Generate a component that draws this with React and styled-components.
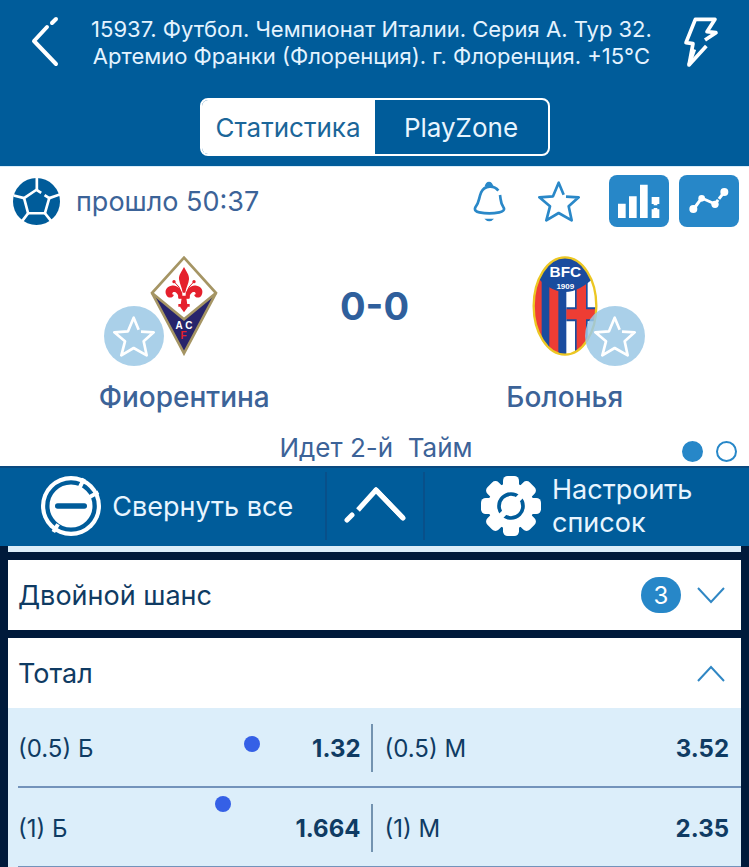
import React, { useState } from "react";
import styled, { createGlobalStyle } from "styled-components";

const GlobalStyle = createGlobalStyle`
  * {
    box-sizing: border-box;
  }
  html {
    scrollbar-width: none;
  }
  body {
    margin: 0;
    background: #001a3b;
    font-family: Inter, "Liberation Sans", sans-serif;
  }
  button {
    font: inherit;
    color: inherit;
    background: none;
    border: 0;
    padding: 0;
    cursor: pointer;
  }
  svg {
    display: block;
  }
`;

const Header = styled.header`
  background: #005c9a;
  color: #fff;
  padding: 16px 30px 10px;
  border-bottom: 1px solid #d8edfa;
`;

const TitleRow = styled.div`
  display: flex;
  justify-content: space-between;
  align-items: flex-start;
`;

const Title = styled.h1`
  margin: 0;
  flex: 1;
  font-size: 22px;
  line-height: 27px;
  font-weight: 400;
  text-align: center;
  color: #e4f3ff;
`;

const Tabs = styled.div`
  display: flex;
  width: 350px;
  height: 58px;
  margin: 28px auto 0;
  border: 2px solid #fff;
  border-radius: 8px;
  overflow: hidden;
`;

const Tab = styled.button`
  flex: 1;
  font-size: 26px;
  background: ${(p) => (p.$active ? "#fff" : "transparent")};
  color: ${(p) => (p.$active ? "#1b6699" : "#e8f5ff")};
`;

const Match = styled.section`
  background: #fff;
  color: #3c6398;
  padding: 8px 10px 2px 13px;
`;

const TopRow = styled.div`
  display: flex;
  align-items: center;
  height: 52px;
`;

const Clock = styled.span`
  flex: 1;
  margin-left: 16px;
  font-size: 27px;
`;

const Actions = styled.div`
  display: flex;
  gap: 10px;
`;

const IconButton = styled.button`
  width: 60px;
  height: 52px;
  display: flex;
  align-items: center;
  justify-content: center;
  border-radius: 8px;
  color: #2a88c8;
  background: ${(p) => (p.$filled ? "#2787c8" : "transparent")};
  margin-right: ${(p) => (p.$spaced ? "10px" : "0")};
`;

const Teams = styled.div`
  display: grid;
  grid-template-columns: 1fr 120px 1fr;
  margin-top: 29px;
  padding: 0 44px 0 41px;
`;

const Team = styled.div`
  display: flex;
  flex-direction: column;
  align-items: center;
  gap: 25px;
`;

const Crest = styled.div`
  position: relative;
  width: 68px;
  height: 100px;
`;

const FavButton = styled.button`
  position: absolute;
  bottom: -10px;
  ${(p) => p.$side}: -46px;
  width: 60px;
  height: 60px;
  display: flex;
  align-items: center;
  justify-content: center;
  border-radius: 50%;
  background: rgba(155, 200, 229, 0.85);
  color: #fff;
`;

const TeamName = styled.h2`
  margin: 0;
  font-size: 28px;
  line-height: 32px;
  font-weight: 500;
`;

const Score = styled.div`
  text-align: center;
  font-size: 38px;
  line-height: 100px;
  font-weight: 700;
  white-space: nowrap;
  color: #2f5f9c;
`;

const StatusRow = styled.div`
  display: grid;
  grid-template-columns: 1fr auto 1fr;
  margin-top: 19px;
`;

const Status = styled.p`
  grid-column: 2;
  margin: 0;
  font-size: 26px;
  line-height: 32px;
  white-space: pre;
`;

const Pager = styled.div`
  display: flex;
  justify-content: flex-end;
  align-items: center;
  gap: 13px;
  padding: 6px 2px 0 0;
`;

const PagerDot = styled.button`
  width: 21px;
  height: 21px;
  border-radius: 50%;
  border: 2px solid #2787c8;
  background: ${(p) => (p.$active ? "#2787c8" : "#fff")};
`;

const Toolbar = styled.nav`
  display: grid;
  grid-template-columns: 1fr 100px 1fr;
  height: 80px;
  background: #005c9a;
  border-top: 2px solid #0a4a80;
  color: #e8f5ff;
`;

const ToolButton = styled.button`
  display: flex;
  align-items: center;
  justify-content: center;
  gap: 11px;
  padding: ${(p) => (p.$inset ? "0 0 2px 10px" : "0 0 2px")};
  font-size: 27px;
  line-height: 33px;
  text-align: left;
`;

const ToggleButton = styled(ToolButton)`
  margin: 4px 0 6px;
  border: solid #08508a;
  border-width: 0 2px;
`;

const Markets = styled.main`
  padding: 0 8px;
`;

const PreviousMarket = styled.div`
  height: 6px;
  background: #dceefa;
`;

const Market = styled.section`
  margin-top: 8px;
  background: #fff;
  color: #0f3b63;
`;

const MarketHead = styled.button`
  display: flex;
  align-items: center;
  gap: 16px;
  width: 100%;
  height: 70px;
  padding: 0 16px 0 10px;
  font-size: 27px;
  text-align: left;
`;

const MarketName = styled.span`
  flex: 1;
`;

const Count = styled.span`
  width: 40px;
  height: 36px;
  border-radius: 18px;
  background: #2787c8;
  color: #fff;
  font-size: 24px;
  line-height: 38px;
  text-align: center;
`;

const Odds = styled.div`
  position: relative;
  background: #dceefa;
  padding-left: 10px;
`;

const OddsRow = styled.div`
  display: grid;
  grid-template-columns: calc(50% - 7px) 1fr;
  align-items: center;
  height: 80px;
  padding-top: 2px;
  border-bottom: 2px solid #7393bb;
`;

const Outcome = styled.button`
  display: flex;
  align-items: center;
  justify-content: space-between;
  height: 48px;
  padding: ${(p) => (p.$first ? "0 10px 0 0" : "0 12px")};
  border-right: ${(p) => (p.$first ? "2px solid #7393b0" : "0")};
  font-size: 24px;

  strong {
    font-weight: 700;
  }
`;

// touch marks left on top of the odds grid
const Mark = styled.span`
  position: absolute;
  left: ${(p) => p.$x}px;
  top: ${(p) => p.$y}px;
  width: 16px;
  height: 16px;
  border-radius: 50%;
  background: #3560e6;
`;

const BackIcon = () => (
  <svg width="30" height="52" viewBox="0 0 30 52" fill="none" stroke="#fff" strokeWidth="4">
    <path d="M26 3L22 7" strokeLinecap="round" />
    <path d="M17 11L4 25L26 48" strokeLinecap="round" strokeLinejoin="round" />
  </svg>
);

const BoltIcon = () => (
  <svg width="36" height="52" viewBox="0 0 108 156" fill="none" stroke="#fff" strokeWidth="11" strokeLinejoin="round">
    <path d="M66 72L99 50L72 47L96 10L37 10L9 80L30 83L18 147L70 90" />
    <path d="M18 147L34 100" />
  </svg>
);

const BallIcon = () => (
  <svg width="47" height="47" viewBox="0 0 140 140">
    <circle cx="70" cy="70" r="70" fill="#005c9a" />
    <g fill="none" stroke="#fff" strokeWidth="8">
      <path d="M84 44L70 35L33 60L45 105H95L108 60L94 51" />
      <path d="M71 0V36M33 60L2 52M108 60L140 49M95 105L115 130M45 105L26 130" />
    </g>
  </svg>
);

const BellIcon = () => (
  <svg width="34" height="42" viewBox="0 0 102 126">
    <path
      d="M79 32C67 16 38 14 27 38C19 57 23 66 10 82C6 91 13 95 22 97C42 101 62 101 82 97C92 95 99 90 95 83C84 67 87 60 84 45"
      fill="none"
      stroke="currentColor"
      strokeWidth="8"
    />
    <path d="M38 19Q41 5 51 5Q61 5 64 19ZM37 116H66Q52 132 37 116Z" fill="currentColor" />
  </svg>
);

const StarIcon = () => (
  <svg width="42" height="41" viewBox="0 0 126 123" fill="none" stroke="currentColor" strokeWidth="8" strokeLinejoin="round">
    <path d="M77 41L62 5L45 46L4 49L36 76L25 118L62 96L101 118L92 76L122 49L84 47" />
  </svg>
);

const BarsIcon = () => (
  <svg width="42" height="34" viewBox="0 0 126 102" fill="#fff">
    <path d="M0 59H23V102H0ZM33 37H56V102H33ZM66 2H89V102H66ZM101 39H124V60H101ZM101 76H124V102H101Z" />
    <path d="M107 58H118V64H107ZM107 72H118V78H107Z" />
  </svg>
);

const LineIcon = () => (
  <svg width="40" height="26" viewBox="0 0 120 78">
    <path d="M14 63L38 30L78 48L105 13" fill="none" stroke="#fff" strokeWidth="9" />
    <g fill="#fff">
      <circle cx="13" cy="63" r="12" />
      <circle cx="38" cy="31" r="10" />
      <circle cx="78" cy="49" r="11" />
      <circle cx="106" cy="12" r="12" />
    </g>
    <path d="M84 31L96 40" stroke="#2787c8" strokeWidth="4" />
  </svg>
);

const FiorentinaCrest = () => (
  <svg width="68" height="100" viewBox="0 0 204 300">
    <path d="M102 5L198 111L102 292L6 111Z" fill="#27246b" />
    <path d="M102 5L198 111L102 190L6 111Z" fill="#fff" />
    <path d="M6 111L102 190L198 111" fill="none" stroke="#a59564" strokeWidth="8" />
    <path d="M102 5L198 111L102 292L6 111Z" fill="none" stroke="#a59564" strokeWidth="8" />
    <g fill="#e5202c">
      <path d="M102 33C94 48 86 57 87 70C89 84 96 94 98 110H106C108 94 116 84 117 70C118 57 110 48 102 33Z" />
      <path d="M97 114C94 97 79 85 64 89C49 91 43 105 49 117C54 128 68 127 72 116C64 117 66 106 74 108C82 110 86 120 86 128H97Z" />
      <path d="M107 114C110 97 125 85 140 89C155 91 161 105 155 117C150 128 136 127 132 116C140 117 138 106 130 108C122 110 118 120 118 128H107Z" />
      <path d="M85 119H119V127H85ZM95 125H109L113 154L102 169L91 154ZM85 144H119V152H85Z" />
      <circle cx="72" cy="77" r="5" />
      <circle cx="132" cy="77" r="5" />
    </g>
    <path d="M73 78Q90 91 95 113M131 78Q114 91 109 113" fill="none" stroke="#e5202c" strokeWidth="3" />
    <text fontFamily="Liberation Sans, sans-serif" fontWeight="700" fontSize="30" textAnchor="middle">
      <tspan x="102" y="220" fill="#fff">
        A C
      </tspan>
      <tspan x="101" y="248" fill="#e5202c">
        F
      </tspan>
    </text>
  </svg>
);

const BolognaCrest = () => (
  <svg width="68" height="100" viewBox="0 0 204 300">
    <clipPath id="oval">
      <ellipse cx="102" cy="150" rx="94" ry="146" />
    </clipPath>
    <g clipPath="url(#oval)">
      <path d="M0 0H204V300H0Z" fill="#1a4c9e" />
      <path d="M0 60H32V300H0ZM55 90H82V300H55Z" fill="#ee3d34" />
      <path d="M106 70H204V300H106Z" fill="#fff" />
      <path d="M132 70H170V300H132ZM106 154H204V196H106Z" fill="#1a4c9e" />
      <path d="M137 70H165V300H137ZM106 160H204V190H106Z" fill="#ee3d34" />
      <path d="M0 0H204V50Q150 108 102 108Q50 108 0 42Z" fill="#1a4c9e" />
    </g>
    <ellipse cx="102" cy="150" rx="94" ry="146" fill="none" stroke="#ecc723" strokeWidth="7" />
    <g fill="#fff" fontFamily="Liberation Sans, sans-serif" fontWeight="700" textAnchor="middle">
      <text x="103" y="63" fontSize="46">
        BFC
      </text>
      <text x="103" y="99" fontSize="24">
        1909
      </text>
    </g>
  </svg>
);

const CollapseIcon = () => (
  <svg width="60" height="60" viewBox="0 0 180 180">
    <circle cx="90" cy="90" r="90" fill="#fff" />
    <circle cx="90" cy="90" r="71" fill="none" stroke="#005c9a" strokeWidth="13" />
    <path d="M51 145L37 168M116 35L129 8M140 66L172 49" stroke="#fff" strokeWidth="12" />
    <path d="M50 90H130" stroke="#005c9a" strokeWidth="16" strokeLinecap="round" />
  </svg>
);

const GearIcon = () => (
  <svg width="60" height="60" viewBox="0 0 180 180">
    <g fill="#fff">
      <circle cx="90" cy="90" r="69" />
      {[0, 45, 90, 135].map((angle) => (
        <rect key={angle} x="66" y="0" width="48" height="180" rx="14" transform={`rotate(${angle} 90 90)`} />
      ))}
    </g>
    <circle cx="90" cy="90" r="36" fill="none" stroke="#005c9a" strokeWidth="11" />
    <path d="M56 124L72 108M108 72L124 56" stroke="#fff" strokeWidth="18" />
  </svg>
);

const ArrowUpIcon = () => (
  <svg width="62" height="40" viewBox="0 0 62 40" fill="none" stroke="#fff" strokeWidth="5">
    <path d="M3 35L8 30" strokeLinecap="round" />
    <path d="M14 25L32 5L59 33" strokeLinejoin="round" />
    <path d="M32 5L59 33" strokeLinecap="round" />
  </svg>
);

const Chevron = ({ up }) => (
  <svg width="28" height="17" viewBox="0 0 28 17" fill="none" stroke="#3087c4" strokeWidth="2">
    <path d={up ? "M1 16L14 2L27 16" : "M1 1L14 15L27 1"} />
  </svg>
);

const totals = [
  { line: "(0.5)", over: "1.32", under: "3.52" },
  { line: "(1)", over: "1.664", under: "2.35" },
];

export default function App() {
  const [tab, setTab] = useState("stats");
  const [open, setOpen] = useState(true);

  return (
    <>
      <GlobalStyle />
      <Header>
        <TitleRow>
          <button aria-label="Назад">
            <BackIcon />
          </button>
          <Title>
            15937. Футбол. Чемпионат Италии. Серия А. Тур 32.
            <br />
            Артемио Франки (Флоренция). г. Флоренция. +15°C
          </Title>
          <button aria-label="Быстрая ставка">
            <BoltIcon />
          </button>
        </TitleRow>
        <Tabs>
          <Tab $active={tab === "stats"} onClick={() => setTab("stats")}>
            Статистика
          </Tab>
          <Tab $active={tab === "zone"} onClick={() => setTab("zone")}>
            PlayZone
          </Tab>
        </Tabs>
      </Header>

      <Match>
        <TopRow>
          <BallIcon />
          <Clock>прошло 50:37</Clock>
          <Actions>
            <IconButton aria-label="Уведомления">
              <BellIcon />
            </IconButton>
            <IconButton aria-label="В избранное" $spaced>
              <StarIcon />
            </IconButton>
            <IconButton aria-label="Статистика матча" $filled>
              <BarsIcon />
            </IconButton>
            <IconButton aria-label="График" $filled>
              <LineIcon />
            </IconButton>
          </Actions>
        </TopRow>
        <Teams>
          <Team>
            <Crest>
              <FiorentinaCrest />
              <FavButton $side="left" aria-label="Фиорентина в избранное">
                <StarIcon />
              </FavButton>
            </Crest>
            <TeamName>Фиорентина</TeamName>
          </Team>
          <Score>0-0</Score>
          <Team>
            <Crest>
              <BolognaCrest />
              <FavButton $side="right" aria-label="Болонья в избранное">
                <StarIcon />
              </FavButton>
            </Crest>
            <TeamName>Болонья</TeamName>
          </Team>
        </Teams>
        <StatusRow>
          <Status>{"Идет 2-й  Тайм"}</Status>
          <Pager>
            <PagerDot $active aria-label="Страница 1" />
            <PagerDot aria-label="Страница 2" />
          </Pager>
        </StatusRow>
      </Match>

      <Toolbar>
        <ToolButton $inset>
          <CollapseIcon />
          Свернуть все
        </ToolButton>
        <ToggleButton aria-label="Вверх">
          <ArrowUpIcon />
        </ToggleButton>
        <ToolButton>
          <GearIcon />
          <span>
            Настроить
            <br />
            список
          </span>
        </ToolButton>
      </Toolbar>

      <Markets>
        <PreviousMarket />
        <Market>
          <MarketHead>
            <MarketName>Двойной шанс</MarketName>
            <Count>3</Count>
            <Chevron />
          </MarketHead>
        </Market>
        <Market>
          <MarketHead aria-expanded={open} onClick={() => setOpen(!open)}>
            <MarketName>Тотал</MarketName>
            <Chevron up={open} />
          </MarketHead>
          {open && (
            <Odds>
              {totals.map((t) => (
                <OddsRow key={t.line}>
                  <Outcome $first>
                    {t.line} Б <strong>{t.over}</strong>
                  </Outcome>
                  <Outcome>
                    {t.line} М <strong>{t.under}</strong>
                  </Outcome>
                </OddsRow>
              ))}
              <Mark $x={236} $y={28} />
              <Mark $x={207} $y={88} />
            </Odds>
          )}
        </Market>
      </Markets>
    </>
  );
}
